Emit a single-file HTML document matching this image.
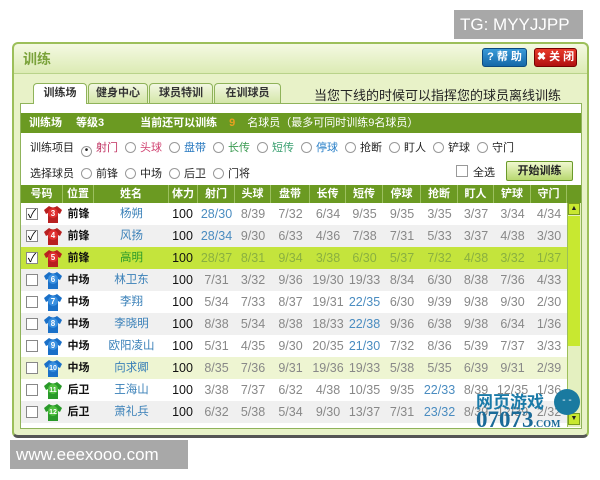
<!DOCTYPE html>
<html><head><meta charset="utf-8"><style>
*{margin:0;padding:0;box-sizing:border-box}
body{width:600px;height:480px;background:#fff;position:relative;overflow:hidden;font-family:"Liberation Sans","Noto Sans CJK SC",sans-serif;font-size:12px;color:#222}
.a{position:absolute}
.win{left:12px;top:42px;width:577px;height:396px;background:#e8f2c8;border:2px solid #9cbf5a;border-radius:6px;border-bottom:3px solid #555}
.title{left:14px;top:44px;width:573px;height:30px;background:linear-gradient(#f4f9e2,#dcebb4);border-bottom:1px solid #b9d38a;border-radius:5px 5px 0 0}
.tab{top:83px;height:20px;background:linear-gradient(#f2f7e2,#d4e6a8);border:1px solid #8fb35a;border-bottom:none;border-radius:4px 4px 0 0;font-size:11px;font-weight:bold;text-align:center;line-height:19px;color:#333}
.content{left:20px;top:103px;width:562px;height:326px;background:#fff;border:1px solid #8fb35a}
.gbar{left:21px;top:113px;width:560px;height:20px;background:#6b9a22;color:#fff;font-size:11px;font-weight:bold;line-height:20px}
.rad{display:inline-block;width:11px;height:11px;border:1px solid #999;border-radius:50%;vertical-align:-2px;margin:0 4px 0 7px;background:#fff}
.hdr{left:21px;top:185px;width:560px;height:18px;background:#6b9a22}
.hc{position:absolute;top:0;height:18px;line-height:18px;color:#fff;font-weight:bold;font-size:11px;text-align:center;border-right:1px solid #9cc060}
.row{position:absolute;left:21px;width:546px;height:22px}
.c{position:absolute;top:0;height:22px;line-height:22px;text-align:center;font-size:12.5px;color:#888}
.cb{position:absolute;left:5px;top:5px;width:12px;height:12px;border:1px solid #888;background:#fff;font-size:12px;line-height:10px;color:#000;text-align:center}
</style></head><body>
<div class="a" style="left:454px;top:10px;width:129px;height:29px;background:#a8a8a8;color:#fff;font-size:17px;line-height:29px;padding-left:6px">TG: MYYJJPP</div>
<div class="a win"></div>
<div class="a title"></div>
<div class="a" style="left:23px;top:49px;font-size:14px;font-weight:bold;color:#7aa23a">训练</div>
<div class="a" style="left:482px;top:48px;width:45px;height:19px;background:linear-gradient(#3a9ad8,#1468a8);border:1px solid #0c4a80;border-radius:3px;color:#fff;font-weight:bold;font-size:11px;line-height:17px;text-align:center">? 帮 助</div>
<div class="a" style="left:534px;top:48px;width:43px;height:19px;background:linear-gradient(#e83a2a,#b01010);border:1px solid #700;border-radius:3px;color:#fff;font-weight:bold;font-size:11px;line-height:17px;text-align:center">✖ 关 闭</div>
<div class="a content"></div>
<div class="a tab" style="left:33px;width:54px;background:#fff;height:21px">训练场</div>
<div class="a tab" style="left:88px;width:60px">健身中心</div>
<div class="a tab" style="left:149px;width:64px">球员特训</div>
<div class="a tab" style="left:214px;width:67px">在训球员</div>
<div class="a" style="left:314px;top:85px;font-size:13px;color:#222">当您下线的时候可以指挥您的球员离线训练</div>
<div class="a gbar"><span style="margin-left:8px">训练场</span><span style="margin-left:14px">等级3</span><span style="margin-left:36px">当前还可以训练</span><span style="margin-left:12px;color:#e8a020">9</span><span style="margin-left:12px;font-weight:normal">名球员（最多可同时训练9名球员）</span></div>
<div class="a" style="left:30px;top:139px;font-size:11px;white-space:nowrap">训练项目<span class="rad" style="text-align:center;line-height:8px;font-size:10px">•</span><span style="color:#c03060">射门</span><span class="rad"></span><span style="color:#d04070">头球</span><span class="rad"></span><span style="color:#2a7ac0">盘带</span><span class="rad"></span><span style="color:#3a9a50">长传</span><span class="rad"></span><span style="color:#3aa070">短传</span><span class="rad"></span><span style="color:#2a80c8">停球</span><span class="rad"></span>抢断<span class="rad"></span>盯人<span class="rad"></span>铲球<span class="rad"></span>守门</div>
<div class="a" style="left:30px;top:165px;font-size:11px;white-space:nowrap">选择球员<span class="rad"></span>前锋<span class="rad"></span>中场<span class="rad"></span>后卫<span class="rad"></span>门将</div>
<div class="a" style="left:456px;top:165px;width:12px;height:12px;border:1px solid #999;background:#fff"></div>
<div class="a" style="left:473px;top:164px;font-size:11px">全选</div>
<div class="a" style="left:506px;top:161px;width:67px;height:20px;background:linear-gradient(#f0f8d0,#b8d870);border:1px solid #6a9a2a;border-radius:2px;font-weight:bold;font-size:11px;text-align:center;line-height:18px">开始训练</div>
<div class="a hdr">
<div class="hc" style="left:0;width:42px">号码</div><div class="hc" style="left:42px;width:31px">位置</div><div class="hc" style="left:73px;width:75px">姓名</div><div class="hc" style="left:148px;width:29px">体力</div><div class="hc" style="left:177px;width:37px">射门</div><div class="hc" style="left:214px;width:36px">头球</div><div class="hc" style="left:250px;width:39px">盘带</div><div class="hc" style="left:289px;width:36px">长传</div><div class="hc" style="left:325px;width:37px">短传</div><div class="hc" style="left:362px;width:38px">停球</div><div class="hc" style="left:400px;width:37px">抢断</div><div class="hc" style="left:437px;width:36px">盯人</div><div class="hc" style="left:473px;width:37px">铲球</div><div class="hc" style="left:510px;width:36px">守门</div>
</div>
<div class="a" style="left:567px;top:203px;width:14px;height:224px;background:#e4f0c0;border-left:1px solid #9cbf5a"></div>
<div class="a" style="left:568px;top:203px;width:12px;height:12px;background:#c8e830;border:1px solid #7a9a20;font-size:7px;text-align:center;line-height:10px">▲</div>
<div class="a" style="left:568px;top:216px;width:12px;height:130px;background:#c8e830"></div>
<div class="a" style="left:568px;top:413px;width:12px;height:12px;background:#c8e830;border:1px solid #7a9a20;font-size:7px;text-align:center;line-height:10px">▼</div>
<div id="rows"></div>
<script>
var d=[
[1,'3','r','前锋','杨朔','28/30|8/39|7/32|6/34|9/35|9/35|3/35|3/37|3/34|4/34',[0]],
[1,'4','r','前锋','风扬','28/34|9/30|6/33|4/36|7/38|7/31|5/33|3/37|4/38|3/30',[0]],
[1,'5','r','前锋','高明','28/37|8/31|9/34|3/38|6/30|5/37|7/32|4/38|3/32|1/37',[]],
[0,'6','b','中场','林卫东','7/31|3/32|9/36|19/30|19/33|8/34|6/30|8/38|7/36|4/33',[]],
[0,'7','b','中场','李翔','5/34|7/33|8/37|19/31|22/35|6/30|9/39|9/38|9/30|2/30',[4]],
[0,'8','b','中场','李晓明','8/38|5/34|8/38|18/33|22/38|9/36|6/38|9/38|6/34|1/36',[4]],
[0,'9','b','中场','欧阳凌山','5/31|4/35|9/30|20/35|21/30|7/32|8/36|5/39|7/37|3/33',[4]],
[0,'10','b','中场','向求卿','8/35|7/36|9/31|19/36|19/33|5/38|5/35|6/39|9/31|2/39',[]],
[0,'11','g','后卫','王海山','3/38|7/37|6/32|4/38|10/35|9/35|22/33|8/39|12/35|1/36',[6]],
[0,'12','g','后卫','萧礼兵','6/32|5/38|5/34|9/30|13/37|7/31|23/32|8/39|12/39|2/32',[6]]];
var L=[177,214,250,289,325,362,400,437,473,510],W=[37,36,39,36,37,38,37,36,37,36];
var col={r:['#b82020','#e03030'],b:['#1a70c8','#3a90e0'],g:['#2a9a2a','#50c040']};
var h='';
d.forEach(function(r,i){
var bg=i==2?'#c4e43c':(i==7?'#eef5d2':(i%2?'#f0f0f0':'#fff'));
var hl=i==2;
h+='<div class="row" style="top:'+(203+i*22)+'px;background:'+bg+'">';
h+='<div class="cb">'+(r[0]?'✓':'')+'</div>';
var c=col[r[2]];
h+='<svg style="position:absolute;left:22px;top:1px" width="20" height="20" viewBox="0 0 20 20"><path d="M6 2 L1 6 L3 10 L5 9 L5 19 L15 19 L15 9 L17 10 L19 6 L14 2 Q10 5 6 2Z" fill="'+c[0]+'"/><circle cx="10" cy="9" r="5" fill="'+c[1]+'"/><text x="10" y="12" font-size="'+(r[1].length>1?7:8)+'" fill="#fff" text-anchor="middle" font-family="Liberation Sans" font-weight="bold">'+r[1]+'</text></svg>';
h+='<div class="c" style="left:42px;width:31px;color:#111;font-weight:bold;font-size:11px">'+r[3]+'</div>';
h+='<div class="c" style="left:73px;width:75px;color:'+(hl?'#2a9a2a':'#3a80b8')+';font-size:11.5px">'+r[4]+'</div>';
h+='<div class="c" style="left:146px;width:31px;color:#111">100</div>';
r[5].split('|').forEach(function(v,j){
var cl=hl?'#8ab040':(r[6].indexOf(j)>=0?'#4a8cc0':'#888');
h+='<div class="c" style="left:'+L[j]+'px;width:'+W[j]+'px;color:'+cl+'">'+v+'</div>';});
h+='</div>';});
document.getElementById('rows').innerHTML=h;
</script>
<div class="a" style="left:476px;top:388px;font-size:17px;font-weight:bold;color:#1a7aa8;letter-spacing:0px">网页游戏</div>
<div class="a" style="left:476px;top:408px;font-family:'Liberation Serif',serif;font-size:23px;font-weight:bold;color:#1a6a98;line-height:24px">07073<span style="font-size:10px">.COM</span></div>
<div class="a" style="left:554px;top:389px;width:26px;height:26px;border-radius:50%;background:#1a7aa0;color:#fff;font-size:10px;text-align:center;line-height:24px">- -</div>
<div class="a" style="left:10px;top:440px;width:178px;height:29px;background:#a8a8a8;color:#fff;font-size:17px;line-height:29px;padding-left:6px">www.eeexooo.com</div>
</body></html>
